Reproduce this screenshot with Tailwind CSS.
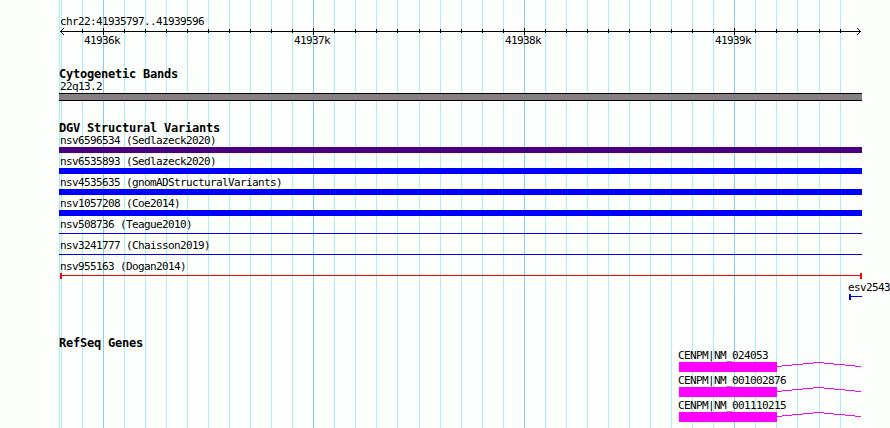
<!DOCTYPE html>
<html lang="en">
<head>
    <meta charset="UTF-8">
    <meta name="viewport" content="width=device-width, initial-scale=1.0">
    <title>chr22:41935797..41939596</title>
    <script src="https://cdn.jsdelivr.net/npm/@tailwindcss/browser@4"></script>
</head>
<body class="bg-[#fcfffc] text-black">
    <div class="relative isolate w-[890px] h-[428px] overflow-hidden font-['DejaVu_Sans_Mono',monospace] text-[11px] leading-[17px] tracking-[-0.622px] whitespace-nowrap">
        <!-- background grid -->
        <svg id="grid" class="absolute inset-0 -z-10" width="890" height="428" shape-rendering="crispEdges"></svg>

        <!-- ruler -->
        <div class="h-7 pt-[13px] pl-[60px]">chr22:41935797..41939596</div>
        <svg id="ruler" class="block" width="890" height="7" shape-rendering="crispEdges" fill="none" stroke="#000">
            <path d="M60 3.5H861"/>
            <path d="M63.5 0v1M62.5 1v1M61.5 2v1M61.5 4v1M62.5 5v1M63.5 6v1"/>
            <path d="M857.5 0v1M858.5 1v1M859.5 2v1M859.5 4v1M858.5 5v1M857.5 6v1"/>
        </svg>
        <div class="flex h-[33px] -mt-[3px] pl-[84px]">
            <span class="w-[210px]">41936k</span>
            <span class="w-[211px]">41937k</span>
            <span class="w-[210px]">41938k</span>
            <span>41939k</span>
        </div>

        <!-- cytoband -->
        <h2 class="h-[13px] pl-[59px] text-xs leading-[18px] font-bold tracking-[-0.224px]">Cytogenetic Bands</h2>
        <div class="h-[15px] pl-[60px]">22q13.2</div>
        <div class="ml-[59px] w-[803px] h-2 bg-[#848084] border-y border-black"></div>

        <!-- variants -->
        <h2 class="h-[13px] mt-[18px] pl-[59px] text-xs leading-[18px] font-bold tracking-[-0.224px]">DGV Structural Variants</h2>
        <div class="ml-[59px] w-[803px]">
            <div class="h-[15px] pl-px">nsv6596534 (Sedlazeck2020)</div>
            <div class="h-1.5 bg-[#4b0082]"></div>
            <div class="h-[15px] pl-px">nsv6535893 (Sedlazeck2020)</div>
            <div class="h-1.5 bg-[#0000ff]"></div>
            <div class="h-[15px] pl-px">nsv4535635 (gnomADStructuralVariants)</div>
            <div class="h-1.5 bg-[#0000ff]"></div>
            <div class="h-[15px] pl-px">nsv1057208 (Coe2014)</div>
            <div class="h-1.5 bg-[#0000ff]"></div>
            <div class="h-[15px] pl-px">nsv508736 (Teague2010)</div>
            <div class="h-1.5 pt-0.5"><div class="h-px bg-[#0000ff]"></div></div>
            <div class="h-[15px] pl-px">nsv3241777 (Chaisson2019)</div>
            <div class="h-1.5 pt-0.5"><div class="h-px bg-[#0000ff]"></div></div>
            <div class="h-[15px] pl-px">nsv955163 (Dogan2014)</div>
            <div class="h-1.5 ml-px pt-0.5 border-x-2 border-[#ff0000]"><div class="h-px bg-[#ff0000]"></div></div>
        </div>
        <div class="h-[15px] pl-[848px]">esv2543</div>
        <div class="h-1.5 ml-[849px] w-[13px] pt-0.5 border-l-2 border-[#0000ff]"><div class="h-px bg-[#0000ff]"></div></div>

        <!-- genes -->
        <h2 class="h-[13px] mt-[34px] pl-[59px] text-xs leading-[18px] font-bold tracking-[-0.224px]">RefSeq Genes</h2>
        <div id="genes" class="pl-[678px]"></div>
    </div>

    <script>
        const lines = [59, 61, 82, 103, 124, 145, 166, 187, 208, 229, 250, 271, 292, 313, 334, 355, 376, 397, 419, 440,
            461, 482, 503, 524, 545, 566, 587, 608, 629, 650, 671, 692, 713, 734, 755, 776, 797, 819, 840];
        const major = [103, 313, 524, 734];
        let grid = '', ticks = '';
        lines.forEach(x => {
            const big = major.includes(x);
            grid += `<rect x="${x}" y="0" width="1" height="428" fill="${big ? '#87ceeb' : '#afeeee'}"/>`;
            if (x > 61) ticks += `<path d="M${x + 0.5} ${big ? '0v7' : '1v4'}"/>`;
        });
        document.getElementById('grid').innerHTML = grid;
        document.getElementById('ruler').innerHTML += ticks;

        document.getElementById('genes').innerHTML = ['NM_024053', 'NM_001002876', 'NM_001110215'].map(id => `
            <div class="h-[15px]">CENPM|${id}</div>
            <div class="flex h-2.5 pl-px">
                <div class="w-[98px] bg-[#ff00ff]"></div>
                <svg width="85" height="10" shape-rendering="crispEdges" fill="none" stroke="#ff00ff">
                    <path d="M0 4.5h5M5 3.5h10M15 2.5h11M26 1.5h10M36 .5h11M47 1.5h10M57 2.5h11M68 3.5h10M78 4.5h6"/>
                </svg>
            </div>`).join('');
    </script>
</body>
</html>
